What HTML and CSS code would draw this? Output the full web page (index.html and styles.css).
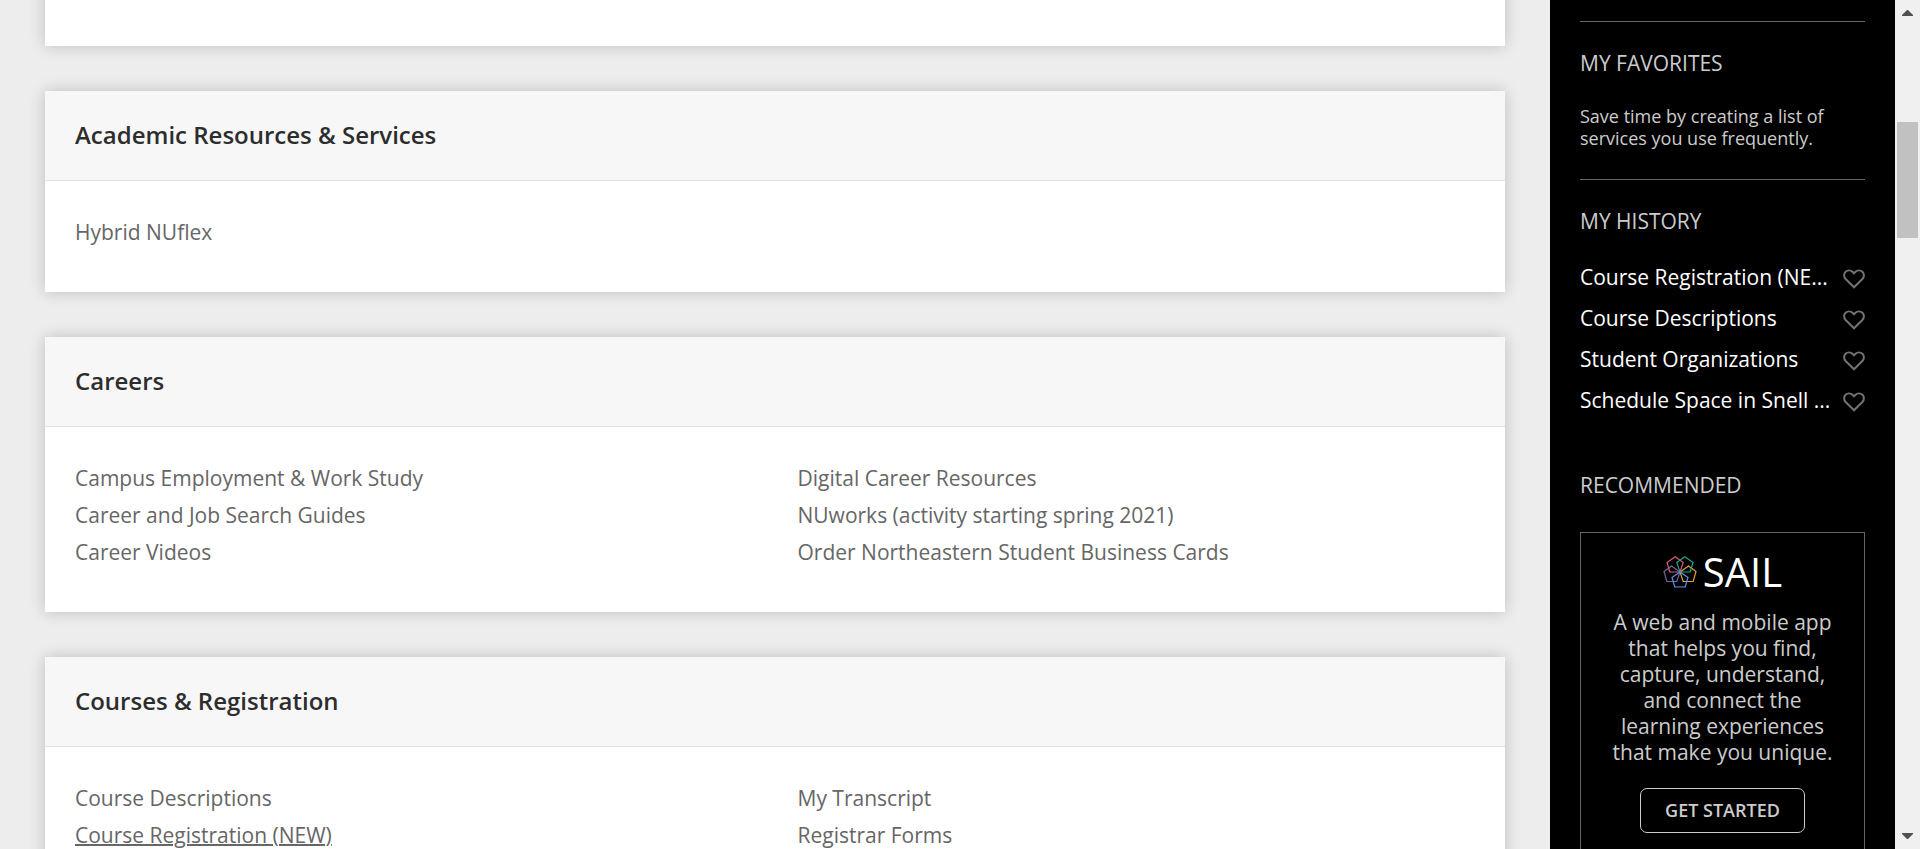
FILE: index.html
```html
<!DOCTYPE html>
<html lang="en">
<head>
<meta charset="utf-8">
<meta name="viewport" content="width=device-width, initial-scale=1">
<title>Student Services</title>
<link rel="stylesheet" href="styles.css">
</head>
<body>
<div class="page">
  <main class="content">
    <section class="card card-previous"><div class="card-body"></div></section>
    <section class="card">
      <h2 class="card-title">Academic Resources &amp; Services</h2>
      <div class="card-body">
        <ul class="links"><li><a href="#">Hybrid NUflex</a></li></ul>
      </div>
    </section>
    <section class="card">
      <h2 class="card-title">Careers</h2>
      <div class="card-body">
        <ul class="links">
          <li><a href="#">Campus Employment &amp; Work Study</a></li>
          <li><a href="#">Career and Job Search Guides</a></li>
          <li><a href="#">Career Videos</a></li>
        </ul>
        <ul class="links">
          <li><a href="#">Digital Career Resources</a></li>
          <li><a href="#">NUworks (activity starting spring 2021)</a></li>
          <li><a href="#">Order Northeastern Student Business Cards</a></li>
        </ul>
      </div>
    </section>
    <section class="card">
      <h2 class="card-title">Courses &amp; Registration</h2>
      <div class="card-body">
        <ul class="links">
          <li><a href="#">Course Descriptions</a></li>
          <li><a class="active" href="#">Course Registration (NEW)</a></li>
        </ul>
        <ul class="links">
          <li><a href="#">My Transcript</a></li>
          <li><a href="#">Registrar Forms</a></li>
        </ul>
      </div>
    </section>
  </main>

  <aside class="sidebar">
    <section class="panel">
      <h3 class="panel-title">MY FAVORITES</h3>
      <p class="panel-note">Save time by creating a list of services you use frequently.</p>
    </section>
    <section class="panel">
      <h3 class="panel-title">MY HISTORY</h3>
      <ul class="history">
        <li><a href="#">Course Registration (NE...</a><button class="heart" type="button" aria-label="Add Course Registration to favorites"><svg viewBox="0 0 22 20"><use href="#heart"/></svg></button></li>
        <li><a href="#">Course Descriptions</a><button class="heart" type="button" aria-label="Add Course Descriptions to favorites"><svg viewBox="0 0 22 20"><use href="#heart"/></svg></button></li>
        <li><a href="#">Student Organizations</a><button class="heart" type="button" aria-label="Add Student Organizations to favorites"><svg viewBox="0 0 22 20"><use href="#heart"/></svg></button></li>
        <li><a href="#">Schedule Space in Snell ...</a><button class="heart" type="button" aria-label="Add Schedule Space to favorites"><svg viewBox="0 0 22 20"><use href="#heart"/></svg></button></li>
      </ul>
    </section>
    <section class="recommended">
      <h3 class="panel-title">RECOMMENDED</h3>
      <div class="promo">
        <div class="logo">
          <svg class="logo-mark" viewBox="0 0 34 32" aria-hidden="true">
            <path stroke="#775f9f" d="M17 16 L8.500 10 L1 15.500 L3.800 25.500 H13.800 Z"/>
            <path stroke="#e2a03f" d="M17 16 L25.500 10 L33 15.500 L30.200 25.500 H20.200 Z"/>
            <path stroke="#5794ef" d="M17 16 L9 21.500 L11.800 31 H22.200 L25 21.500 Z"/>
            <path stroke="#d95a75" d="M17 16 H6.800 L4 6.500 L12.200 .8 L20.200 6.500 Z"/>
            <path stroke="#24a28e" d="M17 16 H27.200 L30 6.500 L21.800 .8 L13.800 6.500 Z"/>
          </svg>
          <span>SAIL</span>
        </div>
        <p class="promo-text">A web and mobile app that helps you find, capture, understand, and connect the learning experiences that make you unique.</p>
        <button class="promo-button" type="button">GET STARTED</button>
      </div>
    </section>
  </aside>

  <div class="scrollbar" aria-hidden="true">
    <svg class="arrow" viewBox="0 0 11 6"><path d="M5 0h1l5 5v1H0V5z"/></svg>
    <div class="track"><div class="thumb"></div></div>
    <svg class="arrow" viewBox="0 0 11 6"><path d="M0 0h11v1L6 6H5L0 1z"/></svg>
  </div>
</div>
<svg class="symbols" aria-hidden="true">
  <symbol id="heart" viewBox="0 0 22 20"><path d="M11 18.300 2.600 10C.6 7.900.6 4.700 2.600 2.800c2-1.900 5-1.900 6.900 0L11 4.400l1.500-1.600c1.900-1.900 4.900-1.900 6.900 0s2 5.100 0 7.200z"/></symbol>
</svg>
</body>
</html>
```
FILE: styles.css
```css
* { box-sizing: border-box; }

body {
  margin: 0;
  background: #ededed;
  font-family: "Open Sans", sans-serif;
  font-size: 21px;
}

h2, h3, p, ul { margin: 0; padding: 0; font-weight: 400; }
ul { list-style: none; }
a { color: inherit; text-decoration: none; }
button { font-family: inherit; cursor: pointer; }

.page { display: flex; height: 100vh; overflow: hidden; }

.content {
  flex: 1;
  min-width: 0;
  padding: 0 45px;
  display: flex;
  flex-direction: column;
  gap: 45px;
}
.card { flex: none; background: #fff; box-shadow: 0 0 15px rgba(0, 0, 0, .2); }
.card-previous { margin-top: -28px; }
.card-title {
  padding: 21px 30px 23px;
  border-bottom: 1px solid #e1e1e1;
  background: #f7f7f7;
  color: #2d2d2d;
  font-size: 24px;
  font-weight: 600;
  line-height: 45px;
}
.card-body {
  display: grid;
  grid-template-columns: 1fr 1fr;
  column-gap: 45px;
  padding: 33px 30px 41px;
}
.links { color: #666; line-height: 37px; }
.active { text-decoration: underline; text-decoration-thickness: 2px; }

.sidebar {
  flex: 0 0 345px;
  min-width: 0;
  padding: 21px 30px 0;
  background: #000;
  color: #ccc;
}
.panel { border-top: 1px solid #666; padding-top: 25px; }
.panel-title { font-size: 21px; line-height: 32px; }
.panel-note { padding: 26px 0 30px; font-size: 18px; line-height: 22px; }

.history { padding-top: 20px; color: #fff; line-height: 41px; }
.history li { display: flex; align-items: center; justify-content: space-between; }
.history a { white-space: nowrap; }
.heart { flex: none; display: flex; padding: 2px 0 0; border: 0; background: none; }
.heart svg { width: 22px; height: 20px; fill: none; stroke: #737373; stroke-width: 2; }
.symbols { display: none; }

.recommended { padding-top: 48px; }
.promo {
  display: flex;
  flex-direction: column;
  align-items: center;
  margin-top: 31px;
  padding: 15px 30px 30px;
  border: 1px solid #666;
  text-align: center;
}
.logo { display: flex; align-items: center; gap: 6px; color: #fff; font-size: 40px; line-height: 48px; }
.logo-mark { width: 34px; height: 32px; fill: none; stroke-width: 1.2; }
.promo-text { padding-top: 13px; line-height: 26px; }
.promo-button {
  margin-top: 23px;
  padding: 0 24px;
  border: 1px solid #ccc;
  border-radius: 7px;
  background: none;
  color: #ccc;
  font-size: 18px;
  font-weight: 600;
  line-height: 43px;
}

.scrollbar {
  flex: 0 0 25px;
  display: flex;
  flex-direction: column;
  align-items: center;
  padding: 10px 0;
  background: #f0f0f0;
}
.arrow { flex: none; width: 11px; height: 6px; fill: #505050; }
.track { flex: 1; align-self: stretch; padding: 106px 2px 0; }
.thumb { height: 116px; background: #c1c1c1; }
```
